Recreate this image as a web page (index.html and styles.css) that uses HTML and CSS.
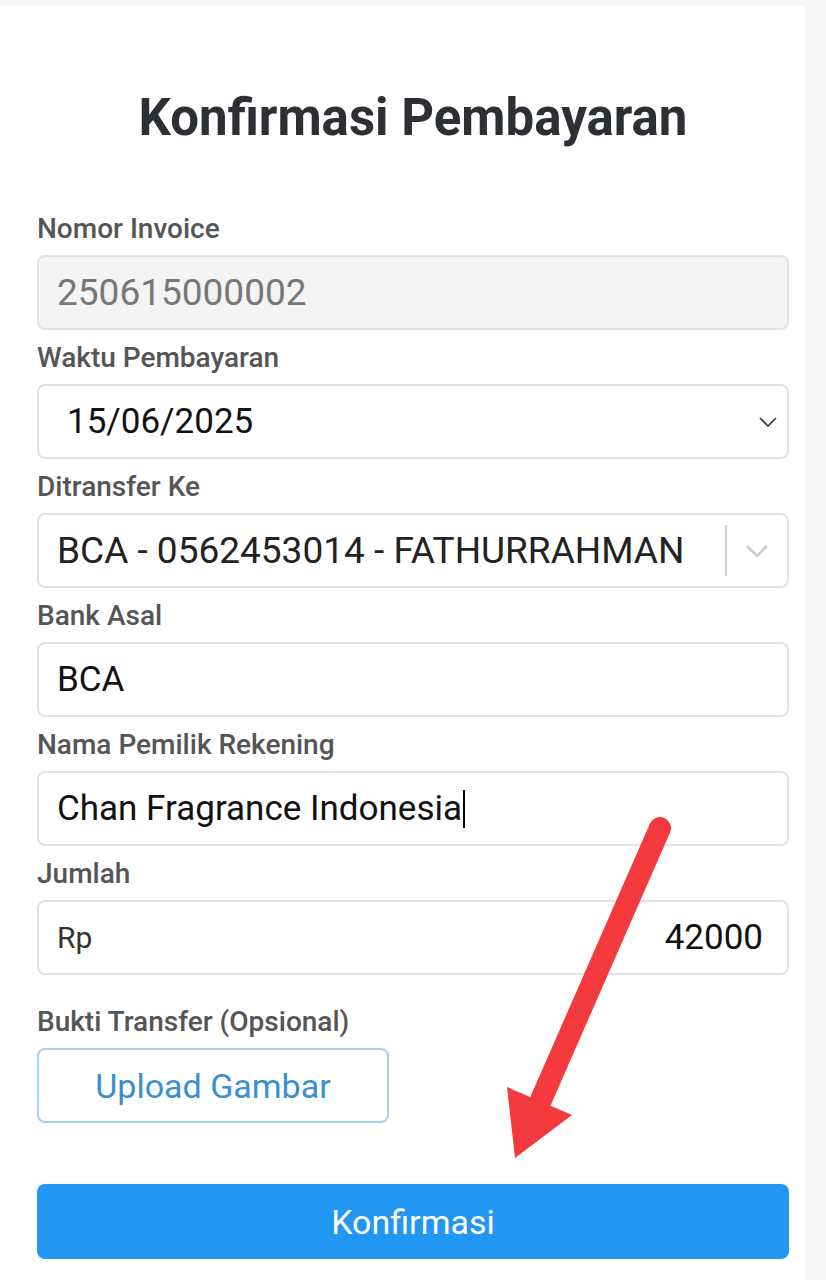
FILE: index.html
```html
<!DOCTYPE html>
<html>
<head>
    <title>Konfirmasi Pembayaran</title>
    <link rel="stylesheet" href="styles.css">
</head>
<body>
    <div class="page">
        <h1>Konfirmasi Pembayaran</h1>

        <div class="field">
            <label>Nomor Invoice</label>
            <div class="input disabled">250615000002</div>
        </div>

        <div class="field">
            <label>Waktu Pembayaran</label>
            <div class="input date">
                <span>15/06/2025</span>
                <svg class="chev-small" width="18" height="10" viewBox="0 0 18 10"><path d="M1 1 L9 9 L17 1" fill="none" stroke="#333" stroke-width="1.6"/></svg>
            </div>
        </div>

        <div class="field">
            <label>Ditransfer Ke</label>
            <div class="input select">
                <span class="select-value">BCA - 0562453014 - FATHURRAHMAN</span>
                <span class="separator"></span>
                <span class="indicator">
                    <svg width="24" height="14" viewBox="0 0 24 14"><path d="M2 2 L12 12 L22 2" fill="none" stroke="#cccccc" stroke-width="2.6"/></svg>
                </span>
            </div>
        </div>

        <div class="field">
            <label>Bank Asal</label>
            <div class="input">BCA</div>
        </div>

        <div class="field">
            <label>Nama Pemilik Rekening</label>
            <div class="input">Chan Fragrance Indonesia<span class="caret"></span></div>
        </div>

        <div class="field field-last">
            <label>Jumlah</label>
            <div class="input money">
                <span class="currency">Rp</span>
                <span>42000</span>
            </div>
        </div>

        <div class="field">
            <label>Bukti Transfer (Opsional)</label>
            <button class="upload">Upload Gambar</button>
        </div>

        <button class="confirm">Konfirmasi</button>

        <!-- panah merah penunjuk tombol -->
        <svg class="arrow" width="826" height="1280" viewBox="0 0 826 1280">
            <line x1="660" y1="828" x2="541" y2="1100" stroke="#f53a3d" stroke-width="22" stroke-linecap="round"/>
            <polygon points="507,1087 572,1115 515,1158" fill="#f53a3d"/>
        </svg>
    </div>
</body>
</html>
```

FILE: styles.css
```css
* {
    box-sizing: border-box;
}

html {
    background: linear-gradient(to right, #fff 805px, #f6f6f6 805px);
}

body {
    margin: 0;
    font-family: Roboto, "Noto Sans", sans-serif;
    color: #111;
}

.page {
    position: relative;
    width: 826px;
    height: 1280px;
    padding: 0 37px;
    border-top: 6px solid #f7f7f7;
}

h1 {
    margin: 0 0 66px;
    padding-top: 82px;
    line-height: 60px;
    font-size: 51px;
    font-weight: 700;
    color: #2c2f34;
    text-align: center;
}

.field {
    margin-bottom: 13px;
}

.field-last {
    margin-bottom: 32px;
}

label {
    display: block;
    font-size: 28px;
    line-height: 30px;
    font-weight: 500;
    color: #555;
    margin-bottom: 11px;
}

.input {
    display: flex;
    align-items: center;
    height: 75px;
    padding: 0 18px;
    border: 2px solid #e2e2e2;
    border-radius: 8px;
    background-color: #fff;
    font-size: 35px;
    color: #111;
}

.disabled {
    background-color: #f4f4f4;
    color: #777;
    font-size: 37px;
}

.date {
    justify-content: space-between;
    padding-left: 28px;
    padding-right: 10px;
}

.select {
    padding-right: 0;
    font-size: 37px;
}

.select-value {
    flex: 1;
    color: #222;
}

.separator {
    width: 2px;
    align-self: stretch;
    margin: 10px 0;
    background-color: #cfcfcf;
}

.indicator {
    width: 60px;
    display: flex;
    justify-content: center;
    align-items: center;
}

.caret {
    display: inline-block;
    width: 2px;
    height: 38px;
    margin-left: 1px;
    background-color: #000;
}

.money {
    justify-content: space-between;
    padding-right: 24px;
}

.currency {
    font-size: 30px;
    color: #333;
}

button {
    font-family: Roboto, "Noto Sans", sans-serif;
    cursor: pointer;
}

.upload {
    display: block;
    width: 352px;
    height: 75px;
    border: 2px solid #a6d1ee;
    border-radius: 8px;
    background-color: #fff;
    color: #3a8fd2;
    font-size: 34px;
}

.confirm {
    display: block;
    width: 100%;
    height: 75px;
    margin-top: 61px;
    border: none;
    border-radius: 8px;
    background-color: #2196f3;
    color: #fff;
    font-size: 34px;
}

.arrow {
    position: absolute;
    left: 0;
    top: -6px;
    pointer-events: none;
}
```
